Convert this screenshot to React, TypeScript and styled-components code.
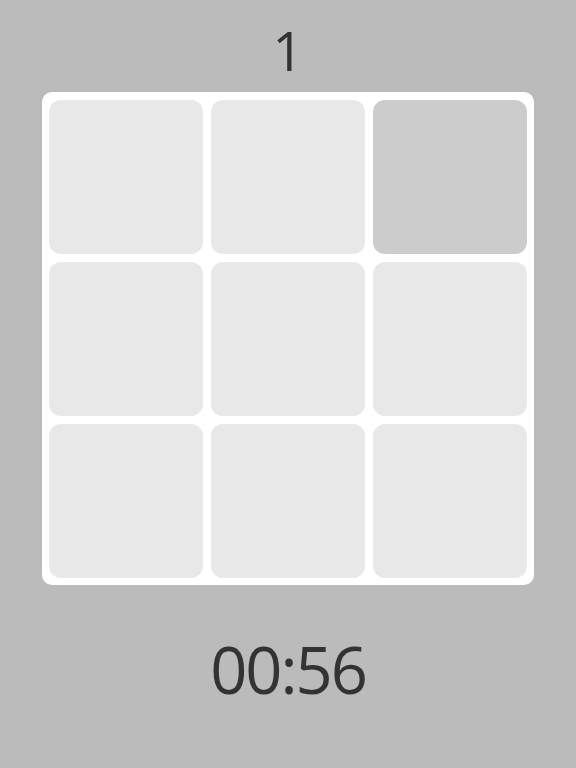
import React from 'react';
import styled, { createGlobalStyle } from 'styled-components';

const GlobalStyle = createGlobalStyle`
	body {
		margin: 0;
		background: #bbbbbb;
		font-family: "Open Sans", "Noto Sans", sans-serif;
	}
`;

const Page = styled.div`
	width: 576px;
	height: 768px;
	display: flex;
	flex-direction: column;
	align-items: center;
`;

const Level = styled.div`
	height: 92px;
	box-sizing: border-box;
	display: flex;
	align-items: center;
	justify-content: center;
	font-size: 54px;
	font-weight: 400;
	color: #333333;
	line-height: 1;
	padding-top: 8px;
`;

const Board = styled.div`
	width: 492px;
	height: 493px;
	box-sizing: border-box;
	padding: 8px 7px 7px 7px;
	background: #ffffff;
	border-radius: 10px;
	display: grid;
	grid-template-columns: repeat(3, 154px);
	grid-template-rows: repeat(3, 154px);
	gap: 8px;
`;

const Cell = styled.div<{ $active?: boolean }>`
	border-radius: 12px;
	background: ${(p) => (p.$active ? '#cccccc' : '#e8e8e8')};
`;

const Timer = styled.div`
	flex: 1;
	display: flex;
	align-items: center;
	justify-content: center;
	font-size: 65px;
	color: #333333;
	letter-spacing: -2px;
	line-height: 1;
	padding-bottom: 14px;
`;

const cells = [false, false, true, false, false, false, false, false, false];

const App = () => (
	<Page>
		<GlobalStyle />
		<Level>1</Level>
		<Board>
			{cells.map((active, i) => (
				<Cell key={i} $active={active} />
			))}
		</Board>
		<Timer>00:56</Timer>
	</Page>
);

export default App;
